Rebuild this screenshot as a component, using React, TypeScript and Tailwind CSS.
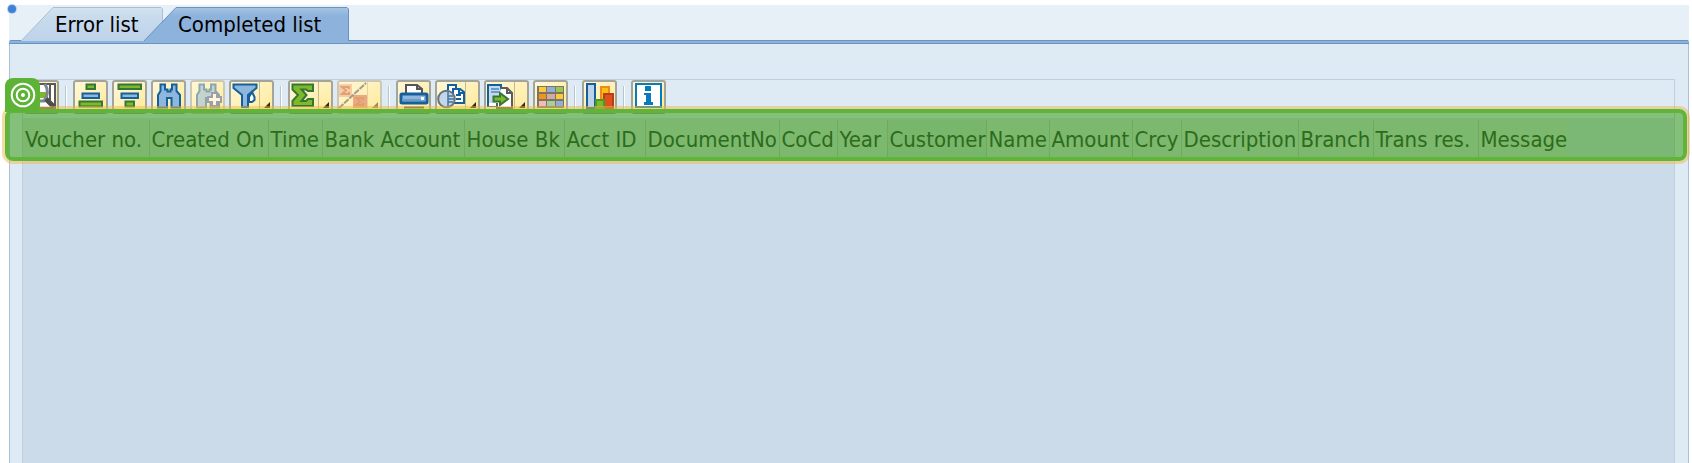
import React from "react";

const columns: { label: string; width: string; active?: boolean }[] = [
  { label: "Voucher no.", width: "w-[126px]" },
  { label: "Created On", width: "w-[119px]" },
  { label: "Time", width: "w-[54px]" },
  { label: "Bank Account", width: "w-[142px]" },
  { label: "House Bk", width: "w-[100px]" },
  { label: "Acct ID", width: "w-[81px]" },
  { label: "DocumentNo", width: "w-[134px]" },
  { label: "CoCd", width: "w-[58px]" },
  { label: "Year", width: "w-[50px]" },
  { label: "Customer", width: "w-[99px]", active: true },
  { label: "Name", width: "w-[63px]" },
  { label: "Amount", width: "w-[83px]" },
  { label: "Crcy", width: "w-[49px]" },
  { label: "Description", width: "w-[117px]" },
  { label: "Branch", width: "w-[75px]" },
  { label: "Trans res.", width: "w-[105px]" },
  { label: "Message", width: "w-[90px]" },
];

const GREEN = "#7fb928";
const GREEN_LINE = "#34763a";
const BLUE = "#8fb6dc";
const BLUE_LINE = "#14609c";

function ToolButton({
  label,
  menu,
  faded,
  children,
}: {
  label: string;
  menu?: boolean;
  faded?: boolean;
  children: React.ReactNode;
}) {
  const width = menu ? 45 : 35;
  return (
    <button
      type="button"
      aria-label={label}
      disabled={faded}
      className={`relative h-[34px] shrink-0 rounded-[3px] bg-linear-to-br from-[#fff8dc] to-[#ffe993] inset-ring-2 ${
        menu ? "w-[45px]" : "w-[35px]"
      } ${faded ? "inset-ring-[#cbc8b8]" : "inset-ring-[#a3a49c]"}`}
    >
      <svg width={width} height="34" viewBox={`0 0 ${width} 34`} fill="none" className="block">
        <g opacity={faded ? 0.5 : 1}>
          {children}
          {menu && (
            <>
              <path d="M30.500 2V32" stroke="#c4ba8e" />
              <path d="M41 22V28H35Z" fill="#33291c" />
            </>
          )}
        </g>
      </svg>
    </button>
  );
}

function Separator() {
  return (
    <span className="mx-[2px] mt-[6px] h-6 w-[2px] shrink-0 border-l border-[#b9c6d0] bg-white" />
  );
}

function Binoculars() {
  return (
    <path
      d="M7 27.500V15L9.500 11V4.500H14V9.500H16.500V11.500H19.500V9.500H21V4.500H25.500V11L29 15V27.500H20.500V18H16V27.500Z"
      fill={BLUE}
      stroke={BLUE_LINE}
      strokeWidth="2"
    />
  );
}

function Toolbar() {
  return (
    <div role="toolbar" aria-label="List functions" className="flex h-[38px] items-start gap-1 pl-[1px]">
      <ToolButton label="Details">
        <path d="M6 4H31V28H6Z" fill="#fff" stroke="#5a5a58" strokeWidth="2" />
        <path d="M26 5V20" stroke="#5a5a58" strokeWidth="2" />
        <path d="M12 12H24V18H12Z" fill={GREEN} />
        <path d="M21 4C24.500 10 24.500 15 20 21H14" stroke="#7d8792" strokeWidth="3" />
        <path d="M22 19L30 27" stroke="#4d4d4f" strokeWidth="5" />
      </ToolButton>
      <Separator />
      <ToolButton label="Sort ascending">
        <path d="M13.500 4.500H22V9H13.500ZM6.500 21.500H29V26.500H6.500Z" fill={GREEN} stroke={GREEN_LINE} strokeWidth="2" />
        <path d="M9.500 13.500H26V18H9.500Z" fill={BLUE} stroke={BLUE_LINE} strokeWidth="2" />
      </ToolButton>
      <ToolButton label="Sort descending">
        <path d="M6.500 4.500H29V9H6.500ZM13.500 21.500H22V26.500H13.500Z" fill={GREEN} stroke={GREEN_LINE} strokeWidth="2" />
        <path d="M9.500 13.500H26V18H9.500Z" fill={BLUE} stroke={BLUE_LINE} strokeWidth="2" />
      </ToolButton>
      <ToolButton label="Find">
        <Binoculars />
      </ToolButton>
      <ToolButton label="Find next" faded>
        <Binoculars />
        <path d="M22 13H27V17H31V22H27V26H22V22H18V17H22Z" fill="#fff" stroke="#3f4fb0" strokeWidth="2" />
      </ToolButton>
      <ToolButton label="Set filter" menu>
        <path d="M4.500 4.500H27.500V8L19 15V27H13V15L4.500 8Z" fill={BLUE} stroke={BLUE_LINE} strokeWidth="2" />
        <path d="M23 12L25.500 17V20L23 22H20V17Z" fill="#fff" stroke={BLUE_LINE} strokeWidth="2" />
      </ToolButton>
      <Separator />
      <ToolButton label="Total" menu>
        <path d="M4.500 4.500H25V11H20L18 9.500H13.500L18.500 15L13.500 21H18L20 19H25V26H4.500V21L10 15L4.500 9.500Z" fill={GREEN} stroke={GREEN_LINE} strokeWidth="2" />
      </ToolButton>
      <ToolButton label="Subtotals" menu faded>
        <path d="M2 4H15V17H2Z" fill="#f0a878" />
        <path d="M16 15H30V28H16Z" fill="#dc6550" />
        <path d="M12 9V7H5L9 10.500L5 14H12V12M26 20V18H19L23 21.500L19 25H26V23" stroke="#c0502f" strokeWidth="2" />
        <path d="M2 28L29 3" stroke="#4a4a55" strokeWidth="2" strokeDasharray="6 1" />
      </ToolButton>
      <Separator />
      <ToolButton label="Print">
        <path d="M10 13V5H21L26 9V13" fill="#fff" stroke="#555" strokeWidth="2" />
        <path d="M21 5V9H26" stroke="#555" strokeWidth="2" />
        <rect x="5" y="14" width="26" height="9" rx="1" fill={BLUE} stroke={BLUE_LINE} strokeWidth="3" />
        <path d="M6 20H30" stroke="#6c9cc8" strokeWidth="2" />
        <path d="M25 17H28V20H25Z" fill="#fff" />
        <path d="M8 27.500H28" stroke="#55594a" strokeWidth="2" />
      </ToolButton>
      <ToolButton label="Views" menu>
        <path d="M13 5H22V21H13Z" fill="#fff" />
        <path d="M13 10V5H21V9" stroke={BLUE_LINE} strokeWidth="2" />
        <path d="M18 9H25L29 12V23H18Z" fill="#fff" stroke={BLUE_LINE} strokeWidth="2" />
        <path d="M21 15H26M21 19H26M24 9V13H29" stroke={BLUE_LINE} strokeWidth="2" />
        <circle cx="11.500" cy="19" r="8.300" fill="#c2d7eb" stroke="#68727c" strokeWidth="2" />
        <path d="M13 11.500V26.500M13 16H18M13 19H19M13 22H18" stroke="#44749f" strokeWidth="1.500" />
      </ToolButton>
      <ToolButton label="Export" menu>
        <path d="M4 5H17V26H4Z" fill="#c4d9ee" stroke={BLUE_LINE} strokeWidth="2" />
        <path d="M7 9H15M7 12H15" stroke="#6b9bc8" strokeWidth="2" />
        <path d="M5 23H12V26H5Z" fill="#fff" />
        <path d="M17 8H23L28 13V28H13V23" fill="#fff" stroke="#5c5c5c" strokeWidth="2" />
        <path d="M23 8V13H28" stroke="#5c5c5c" strokeWidth="2" />
        <path d="M9.500 16.500H16V13L24 19L16 25V21.500H9.500Z" fill={GREEN} stroke={GREEN_LINE} strokeWidth="2" />
      </ToolButton>
      <ToolButton label="Choose layout">
        <path d="M4 6H31V28H4Z" fill="#7d7468" />
        <path d="M6 7H13V12H6ZM23 14H30V19H23Z" fill="#fccb38" />
        <path d="M14 7H22V12H14ZM23 21H30V26H23Z" fill="#8fb0d4" />
        <path d="M23 7H30V12H23Z" fill="#9cc653" />
        <path d="M6 14H13V19H6Z" fill="#f39419" />
        <path d="M14 14H22V19H14Z" fill="#d1aaa0" />
        <path d="M6 21H13V26H6Z" fill="#f2bcb8" />
        <path d="M14 21H22V26H14Z" fill="#a5cf9c" />
      </ToolButton>
      <Separator />
      <ToolButton label="Graphic">
        <path d="M5 4H13V28H5Z" fill="#bcd3ea" stroke={BLUE_LINE} strokeWidth="2" />
        <path d="M19 7H27V28H19Z" fill="#fbbd16" stroke="#ee8b13" strokeWidth="2" />
        <path d="M22 14H31V28H22Z" fill="#e0501f" stroke="#b93c1c" strokeWidth="2" />
        <path d="M14 20H22V28H14Z" fill={GREEN} stroke="#4c9a26" strokeWidth="2" />
      </ToolButton>
      <Separator />
      <ToolButton label="Information">
        <path d="M5 4H30V27H5Z" fill="#fff" stroke="#087bbd" strokeWidth="2" />
        <path d="M14 6H20V11H14ZM13 13H20V22H22V25H13V22H15V15H13Z" fill="#087bbd" />
      </ToolButton>
    </div>
  );
}

function Tab({ label, selected }: { label: string; selected?: boolean }) {
  const width = selected ? 205 : 142;
  return (
    <button
      type="button"
      role="tab"
      aria-selected={!!selected}
      className={`relative flex h-[33px] items-center pt-[3px] pl-[34px] text-left ${
        selected ? "-ml-5 w-[205px]" : "w-[143px]"
      }`}
    >
      <svg width={width} height="34" viewBox={`0 0 ${width} 34`} className="absolute top-0 left-0">
        <defs>
          <linearGradient id={selected ? "tab-on" : "tab-off"} x1="0" y1="0" x2="0" y2="1">
            <stop offset="0" stopColor={selected ? "#a6c5e3" : "#d3e2f0"} />
            <stop offset="0.250" stopColor={selected ? "#8db2dc" : "#c9dcee"} />
            <stop offset="1" stopColor={selected ? "#8db2dc" : "#bdd3e9"} />
          </linearGradient>
        </defs>
        <path
          d={`M0 34L32 0.500H${width - 2}L${width - 0.5} 2V34`}
          fill={selected ? "url(#tab-on)" : "url(#tab-off)"}
          stroke={selected ? "#6a93bf" : "#a9bfd4"}
        />
      </svg>
      <span className="relative whitespace-nowrap">{label}</span>
    </button>
  );
}

export default function App() {
  return (
    <div className="relative flex min-h-screen flex-col bg-white pt-[5px] pr-[3px] pl-[9px] font-['DejaVu_Sans_Condensed','DejaVu_Sans','Noto_Sans',sans-serif] text-[22px] leading-7 text-black">
      <span className="absolute top-[5px] left-2 size-2 rounded-full bg-[#3f80d8] ring-1 ring-[#b5cdec]" />
      <div role="tablist" className="flex h-[35px] items-end bg-[#e8f0f7] pl-3">
        <Tab label="Error list" />
        <Tab label="Completed list" selected />
      </div>
      <div className="h-1 rounded-t-[2px] border-y border-[#6a93bf] bg-[#8db2dc]" />

      <div className="flex flex-1 flex-col border-x border-[#a9c0dc] bg-[#deebf5] pt-[35px] pr-[13px] pl-3">
        <div className="flex flex-1 flex-col border border-b-0 border-[#c0cfdd]">
          <Toolbar />
          <div className="relative flex-1 bg-[#cbdbea] pt-[2px]">
            <table className="w-full table-fixed border-collapse text-[#2e4138]">
              <thead>
                <tr>
                  {columns.map((c) => (
                    <th
                      key={c.label}
                      scope="col"
                      className={`${c.width} h-[38px] border-r border-[#aebfc2] pt-[2px] pl-[2px] text-left font-normal whitespace-nowrap last-of-type:border-r-0 ${
                        c.active ? "bg-[#c5d6d6]" : "bg-[#cddad8]"
                      }`}
                    >
                      {c.label}
                    </th>
                  ))}
                  <td />
                </tr>
              </thead>
            </table>
          </div>
        </div>
      </div>

      <div className="pointer-events-none absolute top-[109px] right-[5px] left-[5px] h-[52px] rounded-lg border-4 border-[#5fb43a] bg-[#2c9501]/50 ring-3 ring-[#f0b848]/50" />
      <div className="absolute top-[78px] left-[5px] flex h-[34px] w-[35px] items-center justify-center rounded-t-lg rounded-br-md bg-[#5cb336]">
        <svg width="26" height="26" viewBox="0 0 26 26" fill="none" stroke="#fff" strokeWidth="2">
          <circle cx="13" cy="13" r="11.300" />
          <circle cx="13" cy="13" r="6.300" />
          <circle cx="13" cy="13" r="2" fill="#fff" stroke="none" />
        </svg>
      </div>
    </div>
  );
}
